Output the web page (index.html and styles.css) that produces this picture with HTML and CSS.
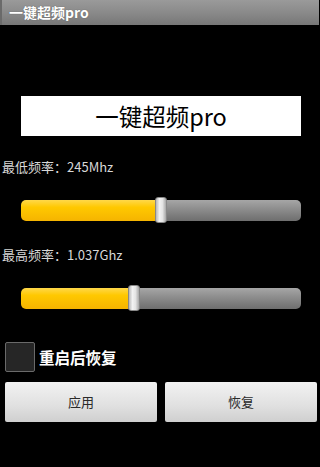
FILE: index.html
```html
<!DOCTYPE html>
<html>
<head>
<meta charset="utf-8">
<link rel="stylesheet" href="styles.css">
</head>
<body>
<div class="titlebar">一键超频pro</div>
<div class="banner">一键超频pro</div>
<div class="label label-min">最低频率：245Mhz</div>
<div class="slider slider-min">
  <div class="track">
    <div class="fill" style="width:134px"></div>
    <div class="rest"></div>
  </div>
  <div class="thumb" style="left:134px"></div>
</div>
<div class="label label-max">最高频率：1.037Ghz</div>
<div class="slider slider-max">
  <div class="track">
    <div class="fill" style="width:107px"></div>
    <div class="rest"></div>
  </div>
  <div class="thumb" style="left:107px"></div>
</div>
<div class="check-row">
  <div class="checkbox"></div>
  <div class="check-label">重启后恢复</div>
</div>
<div class="buttons">
  <div class="btn">应用</div>
  <div class="btn">恢复</div>
</div>
</body>
</html>
```
FILE: styles.css
```css
html, body {
  margin: 0;
  padding: 0;
  background: #000;
}
body {
  width: 319px;
  height: 467px;
  overflow: hidden;
  font-family: "Noto Sans CJK SC", "DejaVu Sans", sans-serif;
  display: flex;
  flex-direction: column;
}
.titlebar {
  flex: none;
  height: 25px;
  line-height: 25px;
  padding-left: 7px;
  color: #fff;
  font-weight: bold;
  font-size: 14px;
  background: linear-gradient(#9a9a9a 0%, #8a8a8a 50%, #777 100%);
  border-left: 2px solid #6a6a6a;
  box-sizing: border-box;
  text-shadow: 0 0 1px #555;
}
.banner {
  flex: none;
  margin: 71px 18px 0 21px;
  height: 40px;
  background: #fff;
  color: #000;
  font-size: 23.5px;
  line-height: 40px;
  text-align: center;
  font-family: "Noto Sans CJK SC", "Open Sans", sans-serif;
}
.label {
  flex: none;
  color: #d8d8d8;
  font-size: 13px;
  line-height: 16px;
  padding-left: 2px;
}
.label-min { margin-top: 23px; }
.label-max { margin-top: 24px; }
.slider {
  flex: none;
  position: relative;
  height: 26px;
  margin: 0 18px 0 21px;
  display: flex;
  align-items: center;
}
.slider-min { margin-top: 22px; }
.slider-max { margin-top: 22px; }
.track {
  flex: 1;
  height: 21px;
  border-radius: 5px;
  overflow: hidden;
  display: flex;
}
.fill {
  background: linear-gradient(#ffd84a 0%, #ffc800 35%, #f5b400 100%);
}
.rest {
  flex: 1;
  background: linear-gradient(#a6a6a6 0%, #8c8c8c 45%, #6e6e6e 100%);
}
.thumb {
  position: absolute;
  top: 0;
  width: 12px;
  height: 26px;
  border-radius: 3px;
  box-sizing: border-box;
  border: 1px solid #888;
  background: linear-gradient(90deg, #b8b8b8 0%, #f2f2f2 35%, #e4e4e4 65%, #a8a8a8 100%);
}
.check-row {
  flex: none;
  display: flex;
  align-items: center;
  margin: 31px 0 0 5px;
  height: 30px;
}
.checkbox {
  width: 30px;
  height: 30px;
  box-sizing: border-box;
  border: 1px solid #6a6a6a;
  border-radius: 2px;
  background: #262626;
}
.check-label {
  margin-left: 4px;
  color: #fff;
  font-size: 15.5px;
  font-weight: bold;
}
.buttons {
  flex: none;
  display: flex;
  gap: 8px;
  margin: 10px 2px 0 5px;
}
.btn {
  flex: 1;
  height: 40px;
  line-height: 40px;
  text-align: center;
  font-size: 13px;
  color: #2a2a2a;
  background: linear-gradient(#f2f2f2 0%, #e0e0e0 60%, #cfcfcf 100%);
  border-radius: 2px;
}
```
